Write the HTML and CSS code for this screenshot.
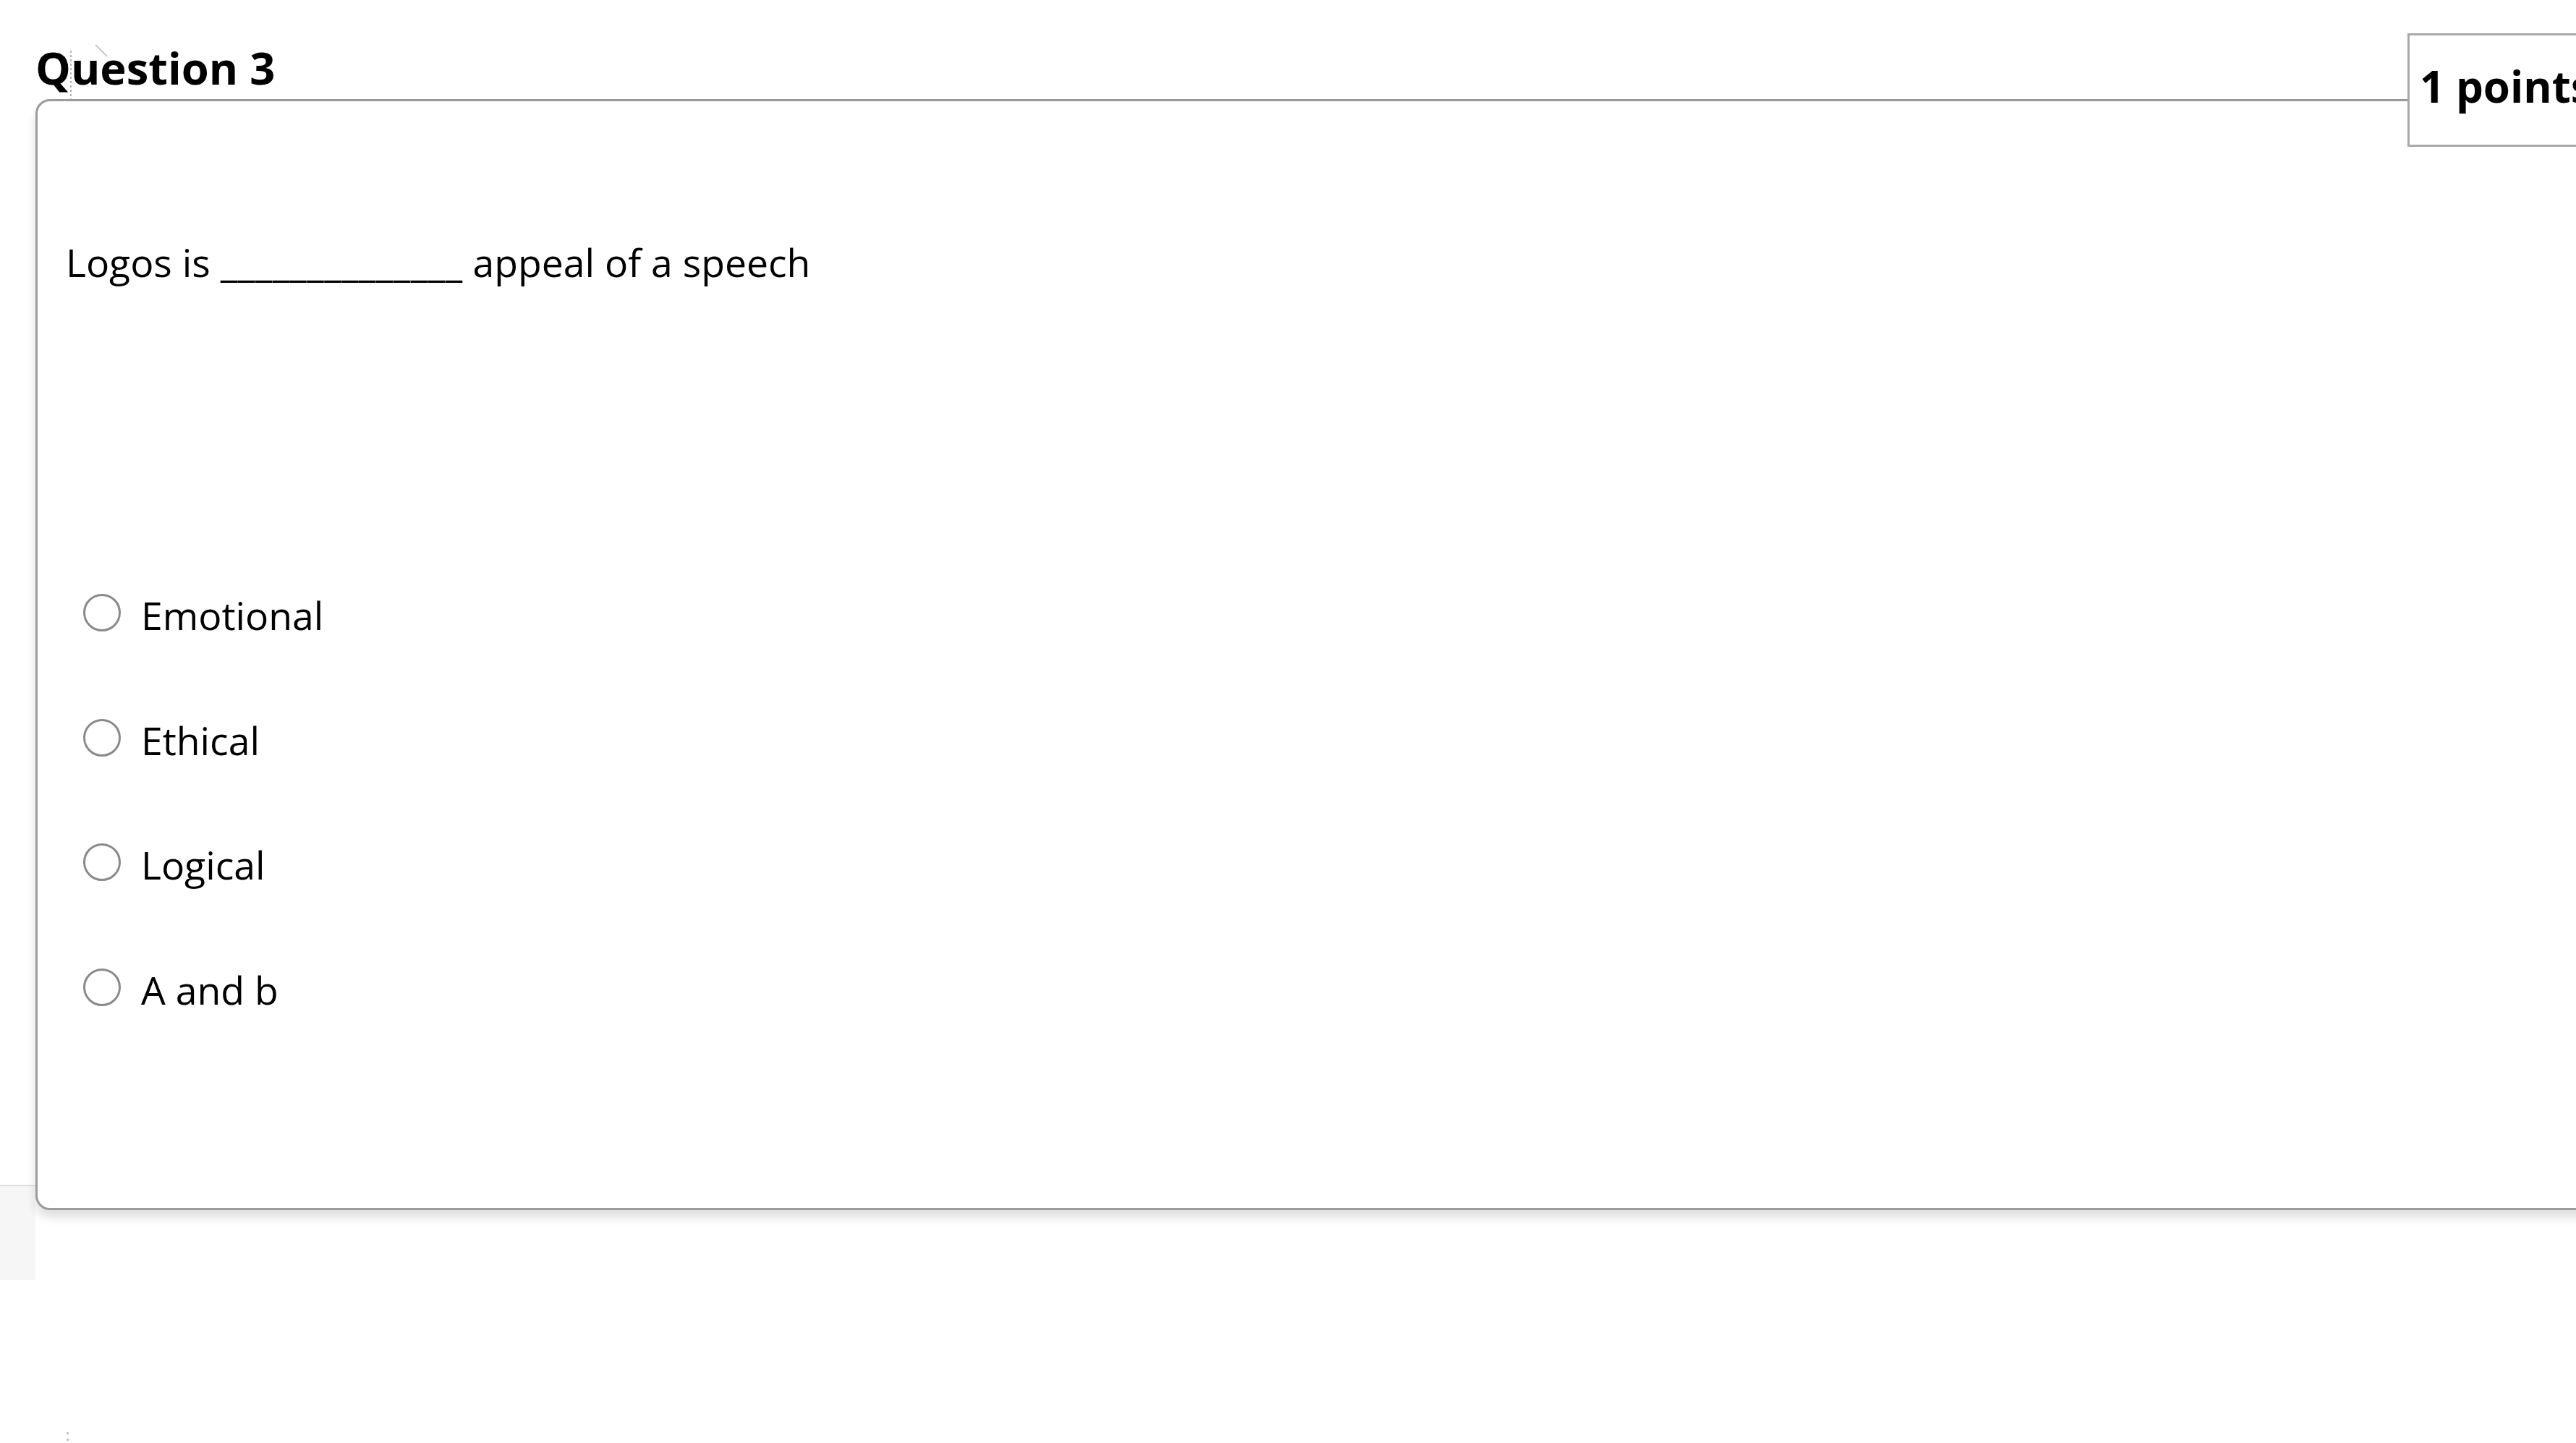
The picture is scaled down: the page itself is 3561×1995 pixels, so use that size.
FILE: index.html
```html
<!DOCTYPE html>
<html lang="en">
<head>
<meta charset="utf-8">
<title>Question 3</title>
<link rel="stylesheet" href="styles.css">
</head>
<body>
<div class="page">
  <div class="side-strip"></div>
  <h2 class="q-title">Question 3</h2>
  <div class="q-card">
    <p class="q-text">Logos is <span class="blank">______________</span> appeal of a speech</p>
    <ul class="options">
      <li class="option"><span class="radio"></span><span class="opt-label">Emotional</span></li>
      <li class="option"><span class="radio"></span><span class="opt-label">Ethical</span></li>
      <li class="option"><span class="radio"></span><span class="opt-label">Logical</span></li>
      <li class="option"><span class="radio"></span><span class="opt-label">A and b</span></li>
    </ul>
  </div>
  <div class="points-badge">1 points</div>
  <svg class="ghost-cursor" width="80" height="80" viewBox="0 0 80 80">
    <line x1="8" y1="20" x2="8" y2="87" stroke="#b5b5b5" stroke-width="2" stroke-dasharray="3 3"/>
    <line x1="42" y1="12" x2="58" y2="28" stroke="#c8c8c8" stroke-width="2"/>
  </svg>
  <div class="grip"><span></span><span></span></div>
</div>
</body>
</html>
```

FILE: styles.css
```css
html, body {
  margin: 0;
  padding: 0;
  background: #ffffff;
  overflow: hidden;
}

body {
  font-family: "Open Sans", "Liberation Sans", sans-serif;
  color: #000;
  width: 3561px;
  height: 1995px;
}

.page {
  position: relative;
  padding: 51px 0 0 49px;
  height: 1995px;
  box-sizing: border-box;
}

.q-title {
  margin: 0 0 2px 0;
  font-size: 61.5px;
  font-weight: 700;
  line-height: 84px;
  color: #000;
}

.q-card {
  position: relative;
  z-index: 1;
  width: 3700px;
  box-sizing: border-box;
  border: 3px solid #9c9c9c;
  border-radius: 20px;
  background: #fff;
  box-shadow: 0 10px 14px rgba(0, 0, 0, 0.13);
  padding: 186px 0 264px 39px;
}

.q-text {
  margin: 0;
  font-size: 53.5px;
  line-height: 74px;
}

.blank {
  letter-spacing: 0.5px;
}

.options {
  list-style: none;
  margin: 414px 0 0 0;
  padding: 0;
  display: flex;
  flex-direction: column;
  gap: 98.7px;
}

.option {
  display: flex;
  align-items: flex-start;
  font-size: 53.5px;
  line-height: 74px;
}

.radio {
  width: 52px;
  height: 52px;
  box-sizing: border-box;
  border: 3px solid #8a8a8a;
  border-radius: 50%;
  margin: 7px 28px 0 24px;
  flex: none;
}

.points-badge {
  position: absolute;
  z-index: 2;
  top: 46px;
  left: 3328px;
  width: 400px;
  height: 157px;
  box-sizing: border-box;
  border: 3px solid #a9a9a9;
  background: #fff;
  padding: 28px 0 0 14px;
  font-size: 60px;
  font-weight: 700;
  line-height: 84px;
  white-space: nowrap;
}

.side-strip {
  position: absolute;
  z-index: 0;
  left: 0;
  top: 1638px;
  width: 49px;
  height: 132px;
  border-top: 2px solid #dcdcdc;
  background: #f6f6f6;
  box-sizing: border-box;
}

.ghost-cursor {
  position: absolute;
  z-index: 3;
  left: 90px;
  top: 50px;
  overflow: visible;
}

.grip {
  display: flex;
  flex-direction: column;
  gap: 6px;
  margin: 307px 0 0 43px;
}

.grip span {
  width: 3px;
  height: 3px;
  border-radius: 50%;
  background: #b0b0b0;
}
```
